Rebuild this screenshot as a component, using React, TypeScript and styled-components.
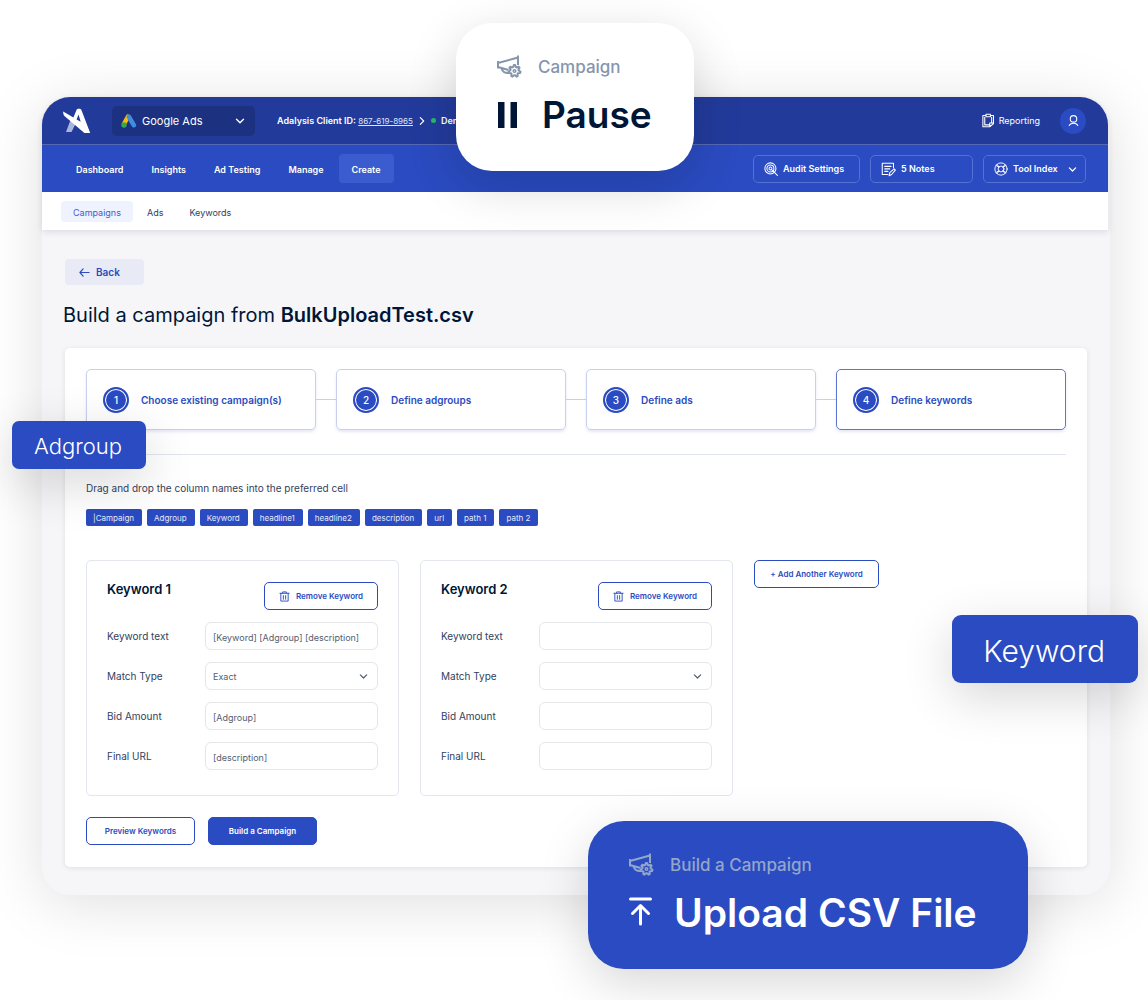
import React, { useId, useState } from "react";
import styled, { createGlobalStyle, css } from "styled-components";

const blue = "#2a4bc1";
const navy = "#001637";

const GlobalStyle = createGlobalStyle`
  * { box-sizing: border-box; }
  body { margin: 0; background: #fff; }
  button, input, select { font: inherit; color: inherit; }
  h1, h2, p, ol, ul { margin: 0; padding: 0; }
  ol, ul { list-style: none; }
`;

const Stage = styled.main`
  position: relative;
  overflow: hidden;
  padding: 97px 38px 105px 42px;
  font-family: Inter, "Open Sans", sans-serif;
  font-size: 10px;
  line-height: 16px;
  color: #33415c;
`;

const Window = styled.section`
  border-radius: 28px;
  background: #f6f6f9;
  box-shadow: 0 8px 60px rgba(0, 0, 0, 0.13);
  padding-bottom: 28px;
`;

const Chrome = styled.header`
  border-radius: 28px 28px 0 0;
  overflow: hidden;
  margin-right: 2px;
  box-shadow: 0 2px 6px rgba(20, 30, 60, 0.12);
`;

const TopBar = styled.div`
  display: flex;
  align-items: center;
  height: 48px;
  padding: 0 22px 0 20px;
  background: #223b9b;
  border-bottom: 1px solid #5468b4;
  color: #fff;
`;

const AccountPicker = styled.button`
  display: flex;
  align-items: center;
  width: 143px;
  height: 30px;
  margin: 0 22px 0 21px;
  padding: 0 10px 0 9px;
  gap: 5px;
  border: 0;
  border-radius: 5px;
  background: #1c3180;
  color: #fff;
  font-size: 11px;
  svg:last-child { margin-left: auto; }
`;

const Client = styled.p`
  display: flex;
  align-items: center;
  gap: 5px;
  font-size: 9px;
  font-weight: 600;
  white-space: nowrap;
  a { color: #dfe5fa; font-size: 8px; font-weight: 400; }
`;

const Dot = styled.span`
  width: 5px;
  height: 5px;
  border-radius: 50%;
  background: #27ba65;
`;

const Reporting = styled.a`
  display: flex;
  align-items: center;
  gap: 3px;
  margin-left: auto;
  color: #fff;
  font-size: 9px;
  text-decoration: none;
`;

const Avatar = styled.button`
  display: grid;
  place-items: center;
  width: 26px;
  height: 26px;
  margin-left: 20px;
  padding: 0;
  border: 0;
  border-radius: 50%;
  background: ${blue};
  color: #fff;
`;

const NavBar = styled.div`
  display: flex;
  align-items: center;
  justify-content: space-between;
  height: 47px;
  padding: 0 22px 0 21px;
  background: ${blue};
  color: #fff;
`;

const NavLinks = styled.nav`
  display: flex;
  gap: 2px;
`;

const NavLink = styled.a<{ $active?: boolean }>`
  padding: 8px 13px 5px;
  border-radius: 4px;
  color: #fff;
  font-size: 9px;
  font-weight: 600;
  text-decoration: none;
  background: ${(p) => (p.$active ? "#3b5ccf" : "transparent")};
`;

const Tools = styled.div`
  display: flex;
  gap: 10px;
`;

const ToolButton = styled.button<{ $width: number }>`
  display: flex;
  align-items: center;
  gap: 5px;
  width: ${(p) => p.$width}px;
  height: 28px;
  padding: 1px 8px 0 10px;
  border: 1px solid #5470d0;
  border-radius: 5px;
  background: transparent;
  color: #fff;
  font-size: 9px;
  font-weight: 600;
  white-space: nowrap;
  svg:nth-of-type(2) { margin-left: auto; }
`;

const SubNav = styled.nav`
  display: flex;
  align-items: center;
  height: 38px;
  padding: 0 19px;
  gap: 2px;
  background: #fff;
`;

const SubLink = styled.a<{ $active?: boolean }>`
  padding: 4px 12px 1px;
  border-radius: 4px;
  color: ${(p) => (p.$active ? "#4560cb" : "#33415c")};
  background: ${(p) => (p.$active ? "#eff2ff" : "transparent")};
  font-size: 9px;
  text-decoration: none;
`;

const Page = styled.div`
  padding: 29px 23px 0;
`;

const BackButton = styled.button`
  display: flex;
  align-items: center;
  gap: 6px;
  width: 79px;
  height: 26px;
  padding: 0 14px;
  border: 0;
  border-radius: 4px;
  background: #e8ebf5;
  color: ${blue};
  font-weight: 600;
`;

const Title = styled.h1`
  margin: 16px 0 18px -2px;
  color: ${navy};
  font-size: 20px;
  line-height: 29px;
  font-weight: 400;
  strong { font-weight: 600; }
`;

const Panel = styled.section`
  padding: 21px 21px 22px;
  border-radius: 5px;
  background: #fff;
  box-shadow: 0 1px 5px rgba(20, 30, 60, 0.1);
`;

const Steps = styled.ol`
  display: grid;
  grid-template-columns: repeat(4, 1fr);
  gap: 20px;
  padding-bottom: 24px;
  border-bottom: 1px solid #e0e5ef;
`;

const Step = styled.li<{ $active: boolean }>`
  position: relative;
  display: flex;
  align-items: center;
  gap: 12px;
  height: 61px;
  padding: 0 16px;
  border: 1px solid ${(p) => (p.$active ? "#5c75cf" : "#c9d0ee")};
  border-radius: 5px;
  box-shadow: 0 2px 3px rgba(42, 75, 193, 0.12);
  color: ${blue};
  font-weight: 600;
  &:not(:last-child)::after {
    content: "";
    position: absolute;
    top: 29px;
    left: 100%;
    width: 21px;
    border-top: 1px solid #c9d0ee;
  }
`;

const StepNumber = styled.span`
  display: grid;
  place-items: center;
  width: 26px;
  height: 26px;
  border: 2px solid ${blue};
  border-radius: 50%;
  background: ${blue};
  box-shadow: inset 0 0 0 1px #fff;
  color: #fff;
  font-weight: 500;
`;

const Hint = styled.p`
  margin: 25px 0 13px;
`;

const Tags = styled.ul`
  display: flex;
  flex-wrap: wrap;
  gap: 5px;
`;

const Tag = styled.li`
  padding: 1px 8px 0 7px;
  border-radius: 2px;
  background: ${blue};
  color: #e5eafb;
  font-size: 8px;
  cursor: grab;
`;

const Groups = styled.div`
  display: flex;
  flex-wrap: wrap;
  align-items: flex-start;
  gap: 21px;
  margin-top: 34px;
`;

const Card = styled.form`
  width: 313px;
  padding: 21px 20px 13px;
  border: 1px solid #e3e5ef;
  border-radius: 5px;
`;

const CardHead = styled.div`
  display: flex;
  justify-content: space-between;
  margin-bottom: 12px;
`;

const CardTitle = styled.h2`
  color: ${navy};
  font-size: 13px;
  line-height: 14px;
  font-weight: 600;
`;

const ActionButton = styled.button<{ $filled?: boolean; $wide?: boolean }>`
  display: flex;
  align-items: center;
  justify-content: center;
  gap: 6px;
  height: 28px;
  min-width: ${(p) => (p.$wide ? 125 : 114)}px;
  padding: 0 13px;
  border: 1px solid ${blue};
  border-radius: 5px;
  background: ${(p) => (p.$filled ? blue : "#fff")};
  color: ${(p) => (p.$filled ? "#fff" : blue)};
  font-size: 8px;
  font-weight: 600;
  white-space: nowrap;
`;

const Field = styled.div`
  display: grid;
  grid-template-columns: 98px 1fr;
  align-items: center;
  margin-bottom: 12px;
`;

const control = css`
  width: 100%;
  height: 28px;
  padding: 2px 7px 0;
  border: 1px solid #e4e6ea;
  border-radius: 6px;
  background: #fff;
  color: #56606f;
  font-size: 9px;
  outline-color: ${blue};
`;

const TextInput = styled.input`${control}`;
const SelectInput = styled.select`${control} appearance: none;`;

const SelectWrap = styled.div`
  display: grid;
  align-items: center;
  color: #56606f;
  > * { grid-area: 1 / 1; }
  svg { justify-self: end; margin-right: 10px; pointer-events: none; }
`;

const Actions = styled.div`
  display: flex;
  gap: 13px;
  margin-top: 21px;
  ${ActionButton} { min-width: 109px; }
`;

const Floating = styled.div`
  position: absolute;
  background: ${blue};
  color: #fff;
  box-shadow: 0 14px 50px rgba(0, 0, 0, 0.16);
`;

const AdgroupChip = styled(Floating)`
  left: 12px;
  top: 421px;
  padding: 11px 24px 9px 22px;
  border-radius: 7px;
  font-size: 22px;
  line-height: 28px;
  font-weight: 300;
`;

const KeywordChip = styled(Floating)`
  right: 10px;
  top: 615px;
  padding: 18px 33px 14px 31px;
  border-radius: 9px;
  font-size: 30px;
  line-height: 36px;
  font-weight: 300;
`;

const Callout = styled(Floating)`
  display: grid;
  grid-template-columns: 28px auto;
  grid-template-rows: 31px 65px;
  align-items: center;
  height: 148px;
  padding: 28px 40px 24px;
  border-radius: 36px;
  column-gap: 14px;
`;

const PauseCallout = styled(Callout)`
  left: 456px;
  top: 23px;
  width: 238px;
  background: #fff;
  color: ${navy};
`;

const UploadCallout = styled(Callout)`
  left: 588px;
  top: 821px;
  width: 440px;
`;

const CalloutLabel = styled.span<{ $light?: boolean }>`
  color: ${(p) => (p.$light ? "#94a6c9" : "#8595ad")};
  font-size: 17px;
  line-height: 30px;
  font-weight: 500;
`;

const CalloutAction = styled.strong<{ $size: number }>`
  padding-left: 4px;
  font-size: ${(p) => p.$size}px;
  line-height: 56px;
  font-weight: 600;
  white-space: nowrap;
`;

type IconProps = { size?: number; color?: string };

const Line = ({ size = 14, box = 24, width = 2, color = "currentColor", children }: IconProps & { box?: number; width?: number; children: React.ReactNode }) => (
  <svg width={size} height={size} viewBox={`0 0 ${box} ${box}`} fill="none" stroke={color} strokeWidth={width} strokeLinecap="round" strokeLinejoin="round" aria-hidden="true">
    {children}
  </svg>
);

const Chevron = ({ size = 10 }: IconProps) => (
  <Line size={size} box={10} width={1.4}><path d="M1.5 3.2 5 6.7l3.5-3.5" /></Line>
);

const Logo = () => (
  <svg width="29" height="27" viewBox="0 0 29 27" role="img" aria-label="Adalysis">
    <path d="M8.500 13 4 25h5.500l4-8z" fill="#a9b5dc" />
    <path d="M1.200 4.500 11.400 10.400 14.400 3.200C15 1.300 18.800 1.300 19.500 3.200L28.200 26h-5.800L2.400 9C1.400 8.200 1 5.500 1.200 4.500z" fill="#fff" />
    <path d="m14.600 12.400 1.900-5 2.200 7.400z" fill="#223b9b" />
  </svg>
);

const AdsMark = () => (
  <svg width="16" height="14" viewBox="0 0 16 14" aria-hidden="true">
    <path d="M7 2.600 3.200 9.500" stroke="#f9bc05" strokeWidth="4.400" strokeLinecap="round" />
    <path d="m8 2.800 4.800 8.400" stroke="#3f8de0" strokeWidth="4.600" strokeLinecap="round" />
    <circle cx="3" cy="11" r="2.700" fill="#34a853" />
  </svg>
);

const gear = Array.from({ length: 28 }, (_, i) => {
  const a = ((i + 0.5) / 28) * Math.PI * 2;
  const r = i % 4 < 2 ? 6 : 4.2;
  return `${(18.5 + r * Math.cos(a)).toFixed(2)},${(17 + r * Math.sin(a)).toFixed(2)}`;
}).join(" ");

const Megaphone = ({ color }: IconProps) => (
  <svg width="28" height="26" viewBox="0 0 28 26" fill="none" stroke={color} strokeWidth="2" strokeLinejoin="round" aria-hidden="true">
    <path d="M22 11V1.500M22 3.500 2 9M2 7v7.500M2 13l10.500 3M5.500 14.500c1 3 3.500 4.800 7.500 4.500" />
    <polygon points={gear} />
    <circle cx="18.500" cy="17" r="1.300" strokeWidth="1.500" />
  </svg>
);

const Clipboard = () => (
  <Line size={15} width={1.7}>
    <path d="M7 4H3v18h11l6-5V4h-4M8 2h7v4H8zM6 7v12h7M17 7v8M20 16h-6v6" />
  </Line>
);

const User = () => (
  <Line size={13} width={2}>
    <circle cx="12" cy="9" r="6" /><path d="M4 21c2-3 4-4 8-4s6 1 8 4" />
  </Line>
);

const Audit = () => (
  <Line size={14} width={1.8}>
    <circle cx="11" cy="11" r="9.500" /><circle cx="11" cy="11" r="6" /><circle cx="11" cy="11" r="2.500" /><path d="m13 13 10 10" />
  </Line>
);

const Notes = () => (
  <Line size={15} width={1.7}>
    <path d="M20 9V2H2v18h9M6 7h10M6 11h8M6 15h5M13 22l1-5 7-6 2 2-6 7z" />
  </Line>
);

const Ring = () => (
  <Line size={14} width={1.6}>
    <circle cx="12" cy="12" r="10.500" /><circle cx="12" cy="12" r="5" />
    <path d="m5 4 3.500 4.500M3.500 6l5 3M19 4l-3.500 4.500M20.500 6l-5 3M5 20l3.500-4.500M3.500 18l5-3M19 20l-3.500-4.500M20.500 18l-5-3" />
  </Line>
);

const Trash = () => (
  <Line size={11} width={2}>
    <path d="M2 5h20M8 5V2h8v3M4 5v17h16V5M9.500 10v8M14.500 10v8" />
  </Line>
);

const PauseMark = () => (
  <svg width="23" height="26" viewBox="0 0 23 26" fill="currentColor" aria-hidden="true">
    <path d="M2 0h6.500v26H2zM14.500 0h6.500v26h-6.500z" />
  </svg>
);

const UploadMark = () => (
  <svg width="25" height="32" viewBox="0 0 25 32" fill="none" stroke="currentColor" strokeWidth="3" strokeLinecap="round" strokeLinejoin="round" aria-hidden="true">
    <path d="M2.500 2h20M12.500 27V9M4.500 16.500l8-8 8 8" />
  </svg>
);

const fieldNames = ["Keyword text", "Match Type", "Bid Amount", "Final URL"];
const columns = ["|Campaign", "Adgroup", "Keyword", "headline1", "headline2", "description", "url", "path 1", "path 2"];
const steps = ["Choose existing campaign(s)", "Define adgroups", "Define ads", "Define keywords"];

const KeywordCard = ({ title, initial }: { title: string; initial: string[] }) => {
  const id = useId();
  const [values, setValues] = useState(initial);
  const change = (i: number, value: string) => setValues(values.map((v, n) => (n === i ? value : v)));
  return (
    <Card>
      <CardHead>
        <CardTitle>{title}</CardTitle>
        <ActionButton type="button"><Trash />Remove Keyword</ActionButton>
      </CardHead>
      {fieldNames.map((name, i) => (
        <Field key={name}>
          <label htmlFor={`${id}${i}`}>{name}</label>
          {name === "Match Type" ? (
            <SelectWrap>
              <SelectInput id={`${id}${i}`} value={values[i]} onChange={(e) => change(i, e.target.value)}>
                <option value="" />
                <option>Exact</option>
              </SelectInput>
              <Chevron size={9} />
            </SelectWrap>
          ) : (
            <TextInput id={`${id}${i}`} value={values[i]} onChange={(e) => change(i, e.target.value)} />
          )}
        </Field>
      ))}
    </Card>
  );
};

export default function App() {
  return (
    <>
      <GlobalStyle />
      <Stage>
        <Window>
          <Chrome>
            <TopBar>
              <Logo />
              <AccountPicker><AdsMark />Google Ads<Chevron /></AccountPicker>
              <Client>
                <span>Adalysis Client ID: <a href="#client">867-619-8965</a></span>
                <Line size={8} width={3.5}><path d="m7 2 10 10L7 22" /></Line>
                <Dot /><span>Demo</span>
              </Client>
              <Reporting href="#reporting"><Clipboard />Reporting</Reporting>
              <Avatar aria-label="Profile"><User /></Avatar>
            </TopBar>
            <NavBar>
              <NavLinks>
                {["Dashboard", "Insights", "Ad Testing", "Manage", "Create"].map((name) => (
                  <NavLink key={name} href={`#${name}`} $active={name === "Create"}>{name}</NavLink>
                ))}
              </NavLinks>
              <Tools>
                <ToolButton $width={107}><Audit />Audit Settings</ToolButton>
                <ToolButton $width={103}><Notes />5 Notes</ToolButton>
                <ToolButton $width={103}><Ring />Tool Index<Chevron size={9} /></ToolButton>
              </Tools>
            </NavBar>
            <SubNav>
              {["Campaigns", "Ads", "Keywords"].map((name) => (
                <SubLink key={name} href={`#${name}`} $active={name === "Campaigns"}>{name}</SubLink>
              ))}
            </SubNav>
          </Chrome>
          <Page>
            <BackButton>
              <Line size={11} width={2.5}><path d="M22 12H2M9 4l-7 8 7 8" /></Line>Back
            </BackButton>
            <Title>Build a campaign from <strong>BulkUploadTest.csv</strong></Title>
            <Panel>
              <Steps>
                {steps.map((name, i) => (
                  <Step key={name} $active={i === 3}><StepNumber>{i + 1}</StepNumber>{name}</Step>
                ))}
              </Steps>
              <Hint>Drag and drop the column names into the preferred cell</Hint>
              <Tags>{columns.map((name) => <Tag key={name} draggable>{name}</Tag>)}</Tags>
              <Groups>
                <KeywordCard title="Keyword 1" initial={["[Keyword] [Adgroup] [description]", "Exact", "[Adgroup]", "[description]"]} />
                <KeywordCard title="Keyword 2" initial={["", "", "", ""]} />
                <ActionButton $wide>+ Add Another Keyword</ActionButton>
              </Groups>
              <Actions>
                <ActionButton>Preview Keywords</ActionButton>
                <ActionButton $filled>Build a Campaign</ActionButton>
              </Actions>
            </Panel>
          </Page>
        </Window>
        <AdgroupChip>Adgroup</AdgroupChip>
        <KeywordChip>Keyword</KeywordChip>
        <PauseCallout>
          <Megaphone color="#8595ad" /><CalloutLabel>Campaign</CalloutLabel>
          <PauseMark /><CalloutAction $size={37}>Pause</CalloutAction>
        </PauseCallout>
        <UploadCallout>
          <Megaphone color="#94a6c9" /><CalloutLabel $light>Build a Campaign</CalloutLabel>
          <UploadMark /><CalloutAction $size={39}>Upload CSV File</CalloutAction>
        </UploadCallout>
      </Stage>
    </>
  );
}
